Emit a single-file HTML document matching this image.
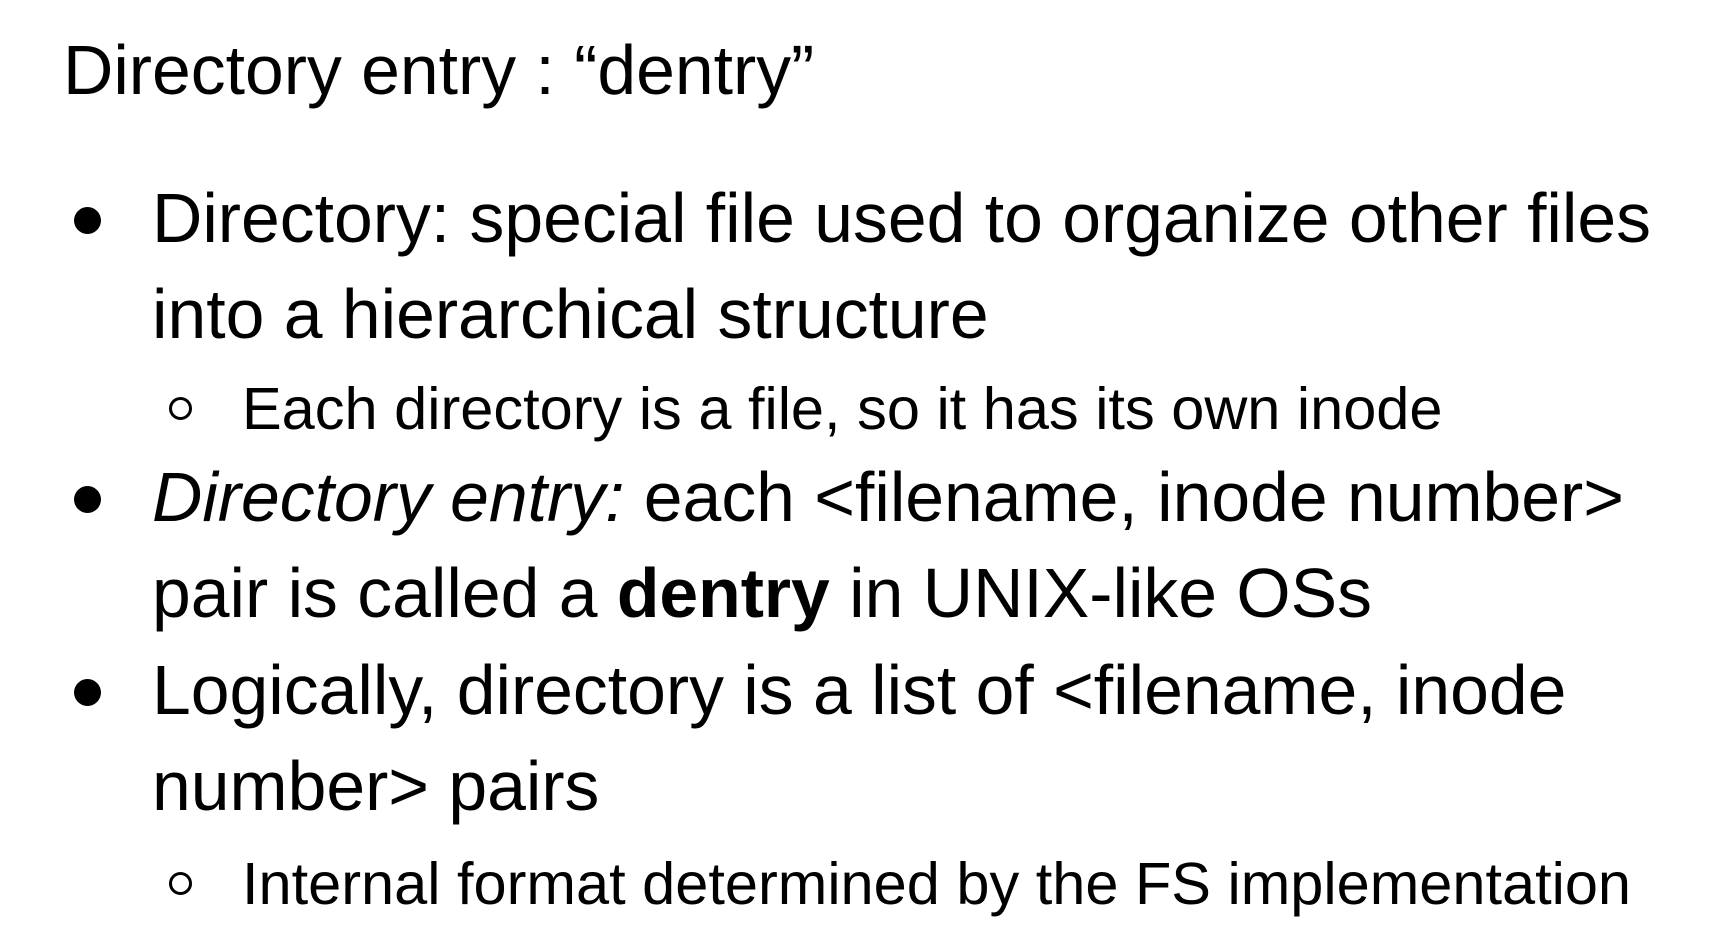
<!DOCTYPE html>
<html><head><style>
html,body{margin:0;padding:0;background:#fff;}
body{width:1724px;height:930px;position:relative;overflow:hidden;font-family:"Liberation Sans",Arial,sans-serif;color:#000;}
.l{position:absolute;white-space:nowrap;line-height:1;}
.b{font-size:69.7px;left:152px;}
.s{font-size:59.5px;left:242px;}
.d{position:absolute;width:27px;height:27px;border-radius:50%;background:#000;left:74px;}
.c{position:absolute;width:17px;height:17px;border-radius:50%;border:3px solid #000;left:169px;}
</style></head><body>
<div class="l" style="font-size:69.7px;left:63px;top:36px;">Directory entry : “dentry”</div>

<div class="d" style="top:207px"></div>
<div class="l b" style="top:184px">Directory: special file used to organize other files</div>
<div class="l b" style="top:280px">into a hierarchical structure</div>
<div class="c" style="top:397px"></div>
<div class="l s" style="top:379px">Each directory is a file, so it has its own inode</div>

<div class="d" style="top:486px"></div>
<div class="l b" style="top:463px"><i>Directory entry:</i> each &lt;filename, inode number&gt;</div>
<div class="l b" style="top:559px">pair is called a <b>dentry</b> in UNIX-like OSs</div>

<div class="d" style="top:679px"></div>
<div class="l b" style="top:656px">Logically, directory is a list of &lt;filename, inode</div>
<div class="l b" style="top:752px">number&gt; pairs</div>
<div class="c" style="top:872px"></div>
<div class="l s" style="top:854px">Internal format determined by the FS implementation</div>
</body></html>
